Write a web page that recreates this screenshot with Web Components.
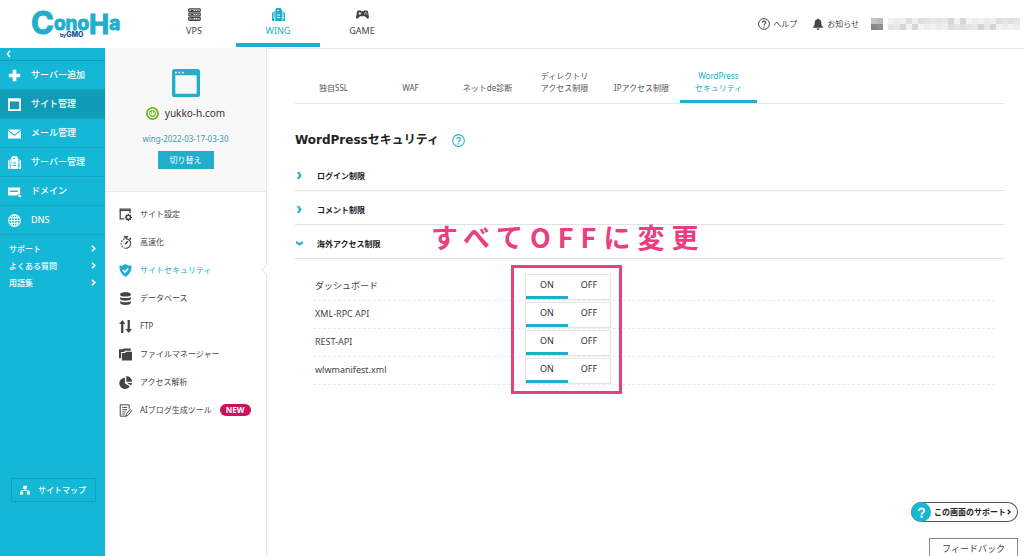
<!DOCTYPE html>
<html lang="ja">
<head>
<meta charset="utf-8">
<meta name="viewport" content="width=device-width, initial-scale=1">
<title>WordPressセキュリティ | ConoHa WING</title>
<style>
  body {
    margin: 0;
    background: #fff;
    color: #444;
    font-family: "Noto Sans", "Noto Sans CJK JP", sans-serif;
    font-size: 8px;
    line-height: 12px;
    --accent: #22aecb;
    --cyan: #15b7d7;
    --cyan-dark: #109bb7;
    --line: #e6e8ea;
    --pink: #e93e80;
  }
</style>
</head>
<body>
<app-shell>
  <app-header slot="header">
    <service-tab icon="vps">VPS</service-tab>
    <service-tab icon="wing" current>WING</service-tab>
    <service-tab icon="game">GAME</service-tab>
  </app-header>
  <side-nav slot="side">
    <side-item icon="plus">サーバー追加</side-item>
    <side-item icon="site" current>サイト管理</side-item>
    <side-item icon="mail">メール管理</side-item>
    <side-item icon="wing">サーバー管理</side-item>
    <side-item icon="domain">ドメイン</side-item>
    <side-item icon="globe">DNS</side-item>
    <side-link slot="links">サポート</side-link>
    <side-link slot="links">よくある質問</side-link>
    <side-link slot="links">用語集</side-link>
  </side-nav>
  <site-panel slot="panel">
    <panel-item icon="setting">サイト設定</panel-item>
    <panel-item icon="timer">高速化</panel-item>
    <panel-item icon="shield" current>サイトセキュリティ</panel-item>
    <panel-item icon="db">データベース</panel-item>
    <panel-item icon="ftp">FTP</panel-item>
    <panel-item icon="folder">ファイルマネージャー</panel-item>
    <panel-item icon="pie">アクセス解析</panel-item>
    <panel-item icon="note" badge="NEW">AIブログ生成ツール</panel-item>
  </site-panel>
  <tab-bar>
    <tab-item>独自SSL</tab-item>
    <tab-item>WAF</tab-item>
    <tab-item>ネットde診断</tab-item>
    <tab-item>ディレクトリ<br>アクセス制限</tab-item>
    <tab-item>IPアクセス制限</tab-item>
    <tab-item current>WordPress<br>セキュリティ</tab-item>
  </tab-bar>
  <page-title>WordPressセキュリティ</page-title>
  <fold-section label="ログイン制限"></fold-section>
  <fold-section label="コメント制限"></fold-section>
  <fold-section label="海外アクセス制限" open>
    <callout-frame note="すべてOFFに変更">
      <switch-row label="ダッシュボード"></switch-row>
      <switch-row label="XML-RPC API"></switch-row>
      <switch-row label="REST-API"></switch-row>
      <switch-row label="wlwmanifest.xml"></switch-row>
    </callout-frame>
  </fold-section>
  <support-dock slot="dock"></support-dock>
</app-shell>

<script>
const ICONS = {
  vps: `<g fill="none" stroke="currentColor"><rect x="1" y="1" width="14" height="3.500" rx=".8" stroke-width="1.600"/><rect x="1" y="6.300" width="14" height="3.500" rx=".8" stroke-width="1.600"/><rect x="1" y="11.600" width="14" height="3.500" rx=".8" stroke-width="1.600"/><path d="M3 2.800h4M3 8h4M3 13.300h4M8.500 2.800h1.200M8.500 8h1.200M8.500 13.300h1.200M11.500 2.800h1.500M11.500 8h1.500M11.500 13.300h1.500" stroke-width="1.500"/></g>`,
  wing: `<path fill="currentColor" fill-rule="evenodd" d="M4 2 5.500 0h5L12.300 2V16H4zM6.200 8v1.200h3.800V8zm0 3v1.200h3.800V11zm0-8.500v1.200h2V2.500zM0 6l1.500-1.500v8.500L3 12v4H0zM2 4.500 3.300 3.500v7.700l-1.300.8zM13 3.500l1.200 1V12l-1.200-.8zM14.800 4.700 16 6v10h-3v-4l1.800 1.500z"/>`,
  game: `<path fill="currentColor" fill-rule="evenodd" d="M3 3h3l.8 1h2.400L10 3h3c1 0 1.500.6 1.800 1.600l1.100 6.400c.3 2-1.700 2.700-2.900 1.300L11 10H5l-2 2.300C1.800 13.700-.2 13 .1 11l1.100-6.400C1.500 3.600 2 3 3 3zm1.200 2v1H3.100v1.200h1.100v1h1.200v-1h1.100V6H5.400V5zm7.300-.2v1.200h1.200V4.800zm-1.300 2v1.200h1.200V6.800zm2.600 0v1.200H14V6.800z"/>`,
  help: `<circle cx="8" cy="8" r="7.200" fill="none" stroke="currentColor" stroke-width="1.300"/><path d="M5.800 6.400C5.800 3.300 10.300 3.400 10.300 6.200 10.300 7.800 8 8 8 9.800" fill="none" stroke="currentColor" stroke-width="1.500"/><circle cx="8" cy="12" r="1" fill="currentColor"/>`,
  question: `<path d="M4.300 5.500C4.300.8 12 .8 12 5.300 12 8 8.200 8 8.200 11" fill="none" stroke="currentColor" stroke-width="2.800"/><circle cx="8.200" cy="14" r="1.800" fill="currentColor"/>`,
  bell: `<path fill="currentColor" d="M7 1.500a1 1 0 0 1 2 0C11.600 2 12.500 4 12.500 7c0 3 1 4 2.500 5.500V13H1v-.5C2.500 11 3.500 10 3.500 7c0-3 .9-5 3.500-5.500zM6 14h4a2 2 0 0 1-4 0z"/>`,
  back: `<path d="M11 1 5.500 8 11 15" fill="none" stroke="currentColor" stroke-width="3.500"/>`,
  next: `<path d="M4.500 2 11 8 4.500 14" fill="none" stroke="currentColor" stroke-width="3.500"/>`,
  fold: `<path fill="currentColor" d="M2 0h5.500L13 8l-5.500 8H2l5-8z"/>`,
  plus: `<path d="M8 1v14M1 8h14" stroke="currentColor" stroke-width="4.500" fill="none"/>`,
  site: `<path d="M1.200 1.500h13.600v13.300H1.200zM1 3.200h14" fill="none" stroke="currentColor" stroke-width="2.200"/>`,
  mail: `<path fill="currentColor" d="M0 3h16L8 9.500zM0 4.500l8 6.500 8-6.500V14H0z"/>`,
  domain: `<path fill="currentColor" fill-rule="evenodd" d="M0 3h15v8.500h-3.500v1.500H0zM2.500 6.700v1.800H12V6.700zM12.500 12h1.700l2.500 1.800-.8 1.700-3-1z"/>`,
  globe: `<g fill="none" stroke="currentColor" stroke-width="1.300"><circle cx="8" cy="8" r="7.200"/><ellipse cx="8" cy="8" rx="3.500" ry="7.200"/><path d="M1 8h14M8 1v14M2 4.500h12M2 11.500h12"/></g>`,
  window: `<path fill="currentColor" fill-rule="evenodd" d="M1.500 0h13Q16 0 16 1.500v13q0 1.500-1.500 1.500h-13Q0 16 0 14.500v-13Q0 0 1.500 0zM1.900 3.600v10.500h12.200V3.600zM1.700 1.600v1h1v-1zm2 0v1h1v-1zm2 0v1h1v-1z"/>`,
  power: `<circle cx="8" cy="8" r="8" fill="#6fb91e"/><g fill="none" stroke="#fff" stroke-width="1.500"><circle cx="8" cy="8" r="5"/><path d="M5.800 6.500C4.800 10.800 11.200 10.800 10.200 6.500M8 4.500v4"/></g>`,
  setting: `<path d="M6.500 13.500H1.500V1.500h12v5" fill="none" stroke="currentColor" stroke-width="1.600"/><path d="M1 3h13" stroke="currentColor" stroke-width="1.500"/><circle cx="11.500" cy="11.500" r="2.600" fill="none" stroke="currentColor" stroke-width="1.800"/><path d="M11.500 7v2M11.500 14v2M7.300 11.500h1.700M14 11.500h2M8.500 8.500l1.200 1.200M13.300 13.300l1.200 1.200M8.500 14.500l1.200-1.200M13.300 9.700l1.200-1.200" stroke="currentColor" stroke-width="1.400"/>`,
  timer: `<g fill="none" stroke="currentColor" stroke-width="1.400"><path d="M8.500 3.200A6 6 0 0 1 8 15.200"/><path d="M7 3.500A6 6 0 0 0 7 15" stroke-dasharray="2 1.500"/><path d="M6 .8h5M8.500 1v2M13 2.500l1.800 1.800" stroke-width="1.800"/><path d="M7.500 10 11 6.500" stroke-width="2"/></g>`,
  shield: `<path fill="currentColor" d="M8 0Q11 2.300 15.500 2.300 16 11.500 8 16 0 11.500.5 2.300 5 2.300 8 0z"/><path d="m4.800 7.500 2.400 2.500 4.200-4.300" fill="none" stroke="#fff" stroke-width="1.800"/>`,
  db: `<path fill="currentColor" d="M1.500 2.500C1.500-.300 14.500-.300 14.500 2.500v1.200C14.500 6.300 1.500 6.300 1.500 3.700zM1.500 6c1.500 2 11.500 2 13 0v2.700c0 2.600-13 2.600-13 0zM1.500 11c1.500 2 11.500 2 13 0v2.500c0 3.200-13 3.200-13 0z"/>`,
  ftp: `<path fill="currentColor" d="M4 0 8 5H5.400v11H2.600V5H0zM10.600 0h2.800v11H16l-4 5-4-5h2.600z"/>`,
  folder: `<path fill="currentColor" d="M0 1.500h5l1-1h8.500v3H7.500L6.300 5H2.500v7.500H0z"/><path fill="currentColor" d="M3.500 6.200h4L9 4.700h7V15.500H3.500z"/>`,
  pie: `<path fill="currentColor" d="M7.300 2v7.200l6 3.500A7 7 0 1 1 7.300 2zM9 0a7 7 0 0 1 7 7.200H9zM10 8.700h6q-.3 1.800-1.200 3z"/>`,
  note: `<g fill="none" stroke="currentColor" stroke-width="1.200"><path d="M12.500 6V1H1.500v14h7M4 4.200h6M4 7h6M4 9.800h4M4 12.400h3"/><path d="m8.500 15 .5-2.700 5-5.800 1.700 1.700-4.700 5.800z"/></g>`,
  sitemap: `<path fill="currentColor" d="M5 1h6v5H9V8h4.500v2.500H16V15h-5v-4.500h1.500V9h-9v1.500H5V15H0v-4.500h2.500V8H7V6H5z"/>`
};

function define(name, css, html) {
  customElements.define(name, class extends HTMLElement {
    constructor() {
      super();
      this.attachShadow({ mode: 'open' });
    }
    connectedCallback() {
      const body = typeof html === 'function' ? html(this) : html;
      const tpl = document.createElement('template');
      tpl.innerHTML = `<style>*{box-sizing:border-box}a{color:inherit;text-decoration:none}button{font:inherit;color:inherit;margin:0;cursor:pointer}${css}</style>${body}`;
      this.shadowRoot.replaceChildren(tpl.content.cloneNode(true));
    }
  });
}

define('ui-icon',
  `:host{display:inline-flex;flex:none;width:13px;height:13px}svg{width:100%;height:100%;display:block;overflow:visible}`,
  el => `<svg viewBox="0 0 16 16" aria-hidden="true">${ICONS[el.getAttribute('name')]}</svg>`);

define('app-shell',
  `:host{display:grid;grid-template:48px 1fr / 105px 162px minmax(0,1fr);min-height:100vh}
   .top{grid-column:1 / -1}
   main{padding:19px 20px 40px 28px}`,
  `<div class="top"><slot name="header"></slot></div>
   <slot name="side"></slot><slot name="panel"></slot>
   <main><slot></slot></main><slot name="dock"></slot>`);

define('conoha-logo',
  `:host{display:block;width:90px;height:30px}svg{display:block;overflow:visible}
   .name{font-family:Inter,sans-serif;font-weight:700;fill:#22aecb;stroke:#22aecb;stroke-width:1}
   .by{font-family:Inter,sans-serif;font-weight:800;fill:#1d4fa0}`,
  `<svg width="90" height="30" viewBox="0 0 90 30" role="img" aria-label="ConoHa by GMO">
    <text class="name" x="-1" y="24" font-size="31">C<tspan y="20" font-size="19">ono</tspan><tspan y="24" font-size="27">H</tspan><tspan y="20" font-size="19">a</tspan></text>
    <text class="by" x="28" y="27" font-size="5">by<tspan font-size="7">GMO</tspan></text>
  </svg>`);

define('app-header',
  `:host{display:flex;height:48px;border-bottom:1px solid var(--line);padding-right:4px}
   .logo{width:152px;padding:10px 0 0 32px}
   nav{display:flex;flex:1}
   .tools{display:flex;align-items:center;gap:15px}
   .tools a{display:flex;align-items:center;gap:3px}
   ui-icon{width:12px;height:12px}
   .user{width:149px;height:13px;margin-left:-3px}`,
  () => {
    let cells = '';
    const tone = ['f2f2f2', 'e8e8e8', 'dfdfdf', 'ececec', 'd6d6d6', 'e4e4e4', 'f0f0f0'];
    for (let i = 0; i < 22; i++)
      for (let j = 0; j < 2; j++)
        cells += `<rect x="${17 + i * 6}" y="${j * 6}" width="6" height="6" fill="#${tone[(i * 3 + j * 5 + (i >> 2)) % 7]}"/>`;
    return `<a class="logo" href="#"><conoha-logo></conoha-logo></a>
    <nav aria-label="サービス"><slot></slot></nav>
    <div class="tools">
      <a href="#"><ui-icon name="help"></ui-icon>ヘルプ</a>
      <a href="#"><ui-icon name="bell"></ui-icon>お知らせ</a>
      <svg class="user" viewBox="0 0 149 13" aria-hidden="true"><path fill="#c4c4c4" d="M0 0h6v6H0z"/><path fill="#bdbdbd" d="M6 0h6v6H6z"/><path fill="#888" d="M0 6h6v6H0z"/><path fill="#8e8e8e" d="M6 6h6v6H6z"/>${cells}</svg>
    </div>`;
  });

define('service-tab',
  `:host{display:block;width:84px}
   a{display:flex;flex-direction:column;align-items:center;height:47px;padding-top:8px;gap:4px;font-size:9px;border-bottom:4px solid transparent}
   :host([current]) a{color:var(--accent);border-color:var(--accent)}`,
  el => `<a href="#"><ui-icon name="${el.getAttribute('icon')}"></ui-icon><span><slot></slot></span></a>`);

define('side-nav',
  `:host{display:flex;flex-direction:column;background:var(--cyan);color:#fff;padding-bottom:54px;font-weight:500}
   .back{display:flex;align-items:center;height:13px;border:0;border-bottom:1px solid var(--cyan-dark);background:none;padding:0 5px}
   .back ui-icon{width:7px;height:8px}
   .links{padding:5px 8px 0 9px}
   .map{display:flex;align-items:center;gap:8px;margin:auto 9px 0 11px;height:24px;padding:0 8px;border:1px solid #149fbb}
   .map ui-icon{width:10px;height:10px}`,
  `<button class="back" aria-label="メニューを閉じる"><ui-icon name="back"></ui-icon></button>
   <nav><slot></slot></nav>
   <div class="links"><slot name="links"></slot></div>
   <a class="map" href="#"><ui-icon name="sitemap"></ui-icon>サイトマップ</a>`);

define('side-item',
  `:host{display:block}
   a{display:flex;align-items:center;gap:10px;height:29px;padding-left:8px;border-bottom:1px solid #13a5c2;font-size:9px}
   :host([current]) a{background:var(--cyan-dark)}`,
  el => `<a href="#"><ui-icon name="${el.getAttribute('icon')}"></ui-icon><span><slot></slot></span></a>`);

define('side-link',
  `:host{display:block}a{display:flex;align-items:center;justify-content:space-between;height:17px}
   ui-icon{width:7px;height:7px}`,
  `<a href="#"><span><slot></slot></span><ui-icon name="next"></ui-icon></a>`);

define('site-panel',
  `:host{display:block;border-right:1px solid var(--line);position:relative}
   .card{display:flex;flex-direction:column;align-items:center;height:144px;padding-top:21px;background:#f8f8f8;border-bottom:1px solid var(--line)}
   .win{width:28px;height:28px;color:var(--accent)}
   .domain{display:flex;align-items:center;gap:6px;margin-top:8px;font-size:10px;line-height:16px;color:#333}
   .plan{margin-top:12px;color:#3a9cb4}
   button{width:56px;height:18px;margin-top:6px;padding:0;border:0;background:var(--accent);color:#fff}
   nav{padding-top:8px}`,
  `<div class="card">
     <ui-icon class="win" name="window"></ui-icon>
     <div class="domain"><ui-icon name="power"></ui-icon><span>yukko-h.com</span></div>
     <div class="plan">wing-2022-03-17-03-30</div>
     <button type="button">切り替え</button>
   </div>
   <nav><slot></slot></nav>`);

define('panel-item',
  `:host{display:block;position:relative}
   a{display:flex;align-items:center;gap:8px;height:28px;padding-left:14px;white-space:nowrap}
   :host([current]) a{color:var(--accent)}
   b{padding:0 6px;border-radius:6px;background:#c8145f;color:#fff;font-weight:700}
   .notch{position:absolute;right:-5px;top:10px;width:8px;height:8px;background:#fff;border-left:1px solid var(--line);border-bottom:1px solid var(--line);transform:rotate(45deg)}`,
  el => `<a href="#"><ui-icon name="${el.getAttribute('icon')}"></ui-icon><span><slot></slot></span>${
    el.hasAttribute('badge') ? `<b>${el.getAttribute('badge')}</b>` : ''}</a>${
    el.hasAttribute('current') ? '<i class="notch"></i>' : ''}`);

define('tab-bar',
  `:host{display:flex;height:36px;border-bottom:1px solid var(--line);color:#555}`,
  `<slot></slot>`);

define('tab-item',
  `:host{display:block;width:77px}
   a{display:flex;align-items:flex-end;justify-content:center;height:36px;padding-bottom:6px;border-bottom:3px solid transparent;text-align:center;white-space:nowrap}
   :host([current]) a{color:var(--accent);border-color:var(--accent)}`,
  `<a href="#"><span><slot></slot></span></a>`);

define('page-title',
  `:host{display:flex;align-items:center;gap:13px;margin:26px 0 7px;color:#222}
   h1{margin:0;font:bold 12px/20px "DejaVu Sans","Noto Sans CJK JP",sans-serif}
   a{display:flex;color:var(--accent)}`,
  `<h1><slot></slot></h1><a href="#" aria-label="ヘルプ"><ui-icon name="help"></ui-icon></a>`);

define('fold-section',
  `:host{display:block}
   h2{margin:0;font:inherit}
   button{display:flex;align-items:center;width:100%;height:34px;padding:4px 0 0 1px;gap:14px;border:0;border-bottom:1px solid #dfe3e8;background:none;color:#222;font-weight:700;text-align:left}
   ui-icon{width:7px;height:9px;color:var(--accent)}
   :host([open]) ui-icon{transform:rotate(90deg)}`,
  el => `<h2><button type="button" aria-expanded="${el.hasAttribute('open')}"><ui-icon name="fold"></ui-icon>${el.getAttribute('label')}</button></h2><slot></slot>`);

define('callout-frame',
  `:host{display:block;position:relative;margin:14px 9px 0 18px}
   .frame{position:absolute;left:198px;top:-8px;bottom:-9px;width:111px;border:3px solid var(--pink);pointer-events:none}
   .note{position:absolute;left:118px;top:-56px;font:bold 27px/40px "Noto Sans CJK JP",sans-serif;letter-spacing:7px;color:var(--pink);white-space:nowrap;pointer-events:none}`,
  el => `<slot></slot><div class="frame"></div><div class="note">${el.getAttribute('note')}</div>`);

define('switch-row',
  `:host{display:block}
   fieldset{display:flex;align-items:center;min-width:0;height:28px;margin:0;padding:0;border:0;border-bottom:1px dashed #e9e9e9}
   .name{width:212px;padding:0 0 2px 2px;font-size:9px}
   .pair{display:flex;width:86px;height:26px;border:1px solid #e6e3e0;background:#fff}
   label{flex:1;display:flex;align-items:center;justify-content:center;border-bottom:3px solid transparent;color:#333;cursor:pointer;font-size:9px}
   label:has(:checked){border-color:var(--accent)}
   input{appearance:none;position:absolute;margin:0;width:1px;height:1px}`,
  el => {
    const name = el.getAttribute('label');
    return `<fieldset aria-label="${name}"><span class="name">${name}</span><div class="pair">
      <label><input type="radio" name="state" value="on" checked><span>ON</span></label>
      <label><input type="radio" name="state" value="off"><span>OFF</span></label></div></fieldset>`;
  });

define('support-dock',
  `:host{position:fixed;right:6px;bottom:0;display:flex;flex-direction:column;align-items:flex-end;gap:16px}
   .help{display:flex;align-items:center;gap:3px;height:20px;padding:0 6px 0 0;border:0;border-radius:10px;background:#fff;box-shadow:inset 0 0 0 1px #555;color:#222;font-weight:700}
   .mark{display:flex;align-items:center;justify-content:center;width:20px;height:20px;border-radius:50%;background:#17b8d2;color:#fff}
   .mark ui-icon{width:11px;height:11px}
   .next{width:6px;height:6px;margin-left:-3px}
   .feed{width:89px;height:18px;padding:2px 0 0;border:1px solid #888;border-bottom:0;background:#fff;font-size:9px}`,
  `<button class="help" type="button"><span class="mark"><ui-icon name="question"></ui-icon></span>この画面のサポート<ui-icon class="next" name="next"></ui-icon></button>
   <button class="feed" type="button">フィードバック</button>`);
</script>
</body>
</html>
